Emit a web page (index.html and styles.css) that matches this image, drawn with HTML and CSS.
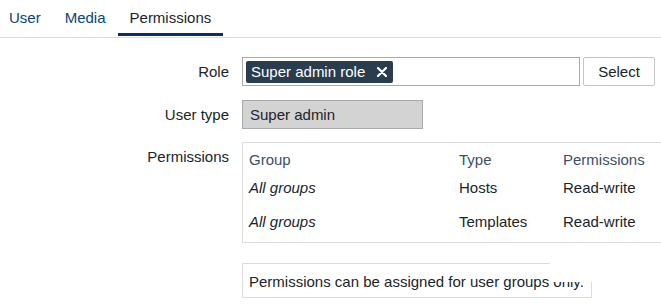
FILE: index.html
```html
<!DOCTYPE html>
<html lang="en">
<head>
  <meta charset="UTF-8" />
  <title>User - Permissions</title>
  <link rel="stylesheet" href="styles.css">
</head>
<body>
  <nav class="tabs">
    <a class="tab" href="#">User</a>
    <a class="tab" href="#">Media</a>
    <a class="tab tab-active" href="#">Permissions</a>
  </nav>

  <form class="form">
    <div class="row">
      <label class="label">Role</label>
      <div class="field field-role">
        <div class="multiselect">
          <span class="tag">Super admin role
            <svg class="tag-remove" width="10" height="10" viewBox="0 0 10 10"><path d="M1 1 L9 9 M9 1 L1 9" stroke="#fff" stroke-width="2.2" stroke-linecap="round"/></svg>
          </span>
        </div>
        <button type="button" class="btn-select">Select</button>
      </div>
    </div>

    <div class="row">
      <label class="label">User type</label>
      <div class="field">
        <div class="readonly">Super admin</div>
      </div>
    </div>

    <div class="row row-perms">
      <label class="label">Permissions</label>
      <div class="field">
        <div class="perm-box">
          <table class="perm-table">
            <thead>
              <tr><th class="col-group">Group</th><th class="col-type">Type</th><th>Permissions</th></tr>
            </thead>
            <tbody>
              <tr class="first"><td><i>All groups</i></td><td>Hosts</td><td>Read-write</td></tr>
              <tr class="second"><td><i>All groups</i></td><td>Templates</td><td>Read-write</td></tr>
            </tbody>
          </table>
        </div>
      </div>
    </div>

    <div class="row row-note">
      <span class="label"></span>
      <div class="field">
        <div class="note">Permissions can be assigned for user groups only.</div>
        <div class="note-cover"></div>
      </div>
    </div>
  </form>
</body>
</html>
```

FILE: styles.css
```css
body {
  font-family: "Liberation Sans", Arial, sans-serif;
  font-size: 15px;
  line-height: 17px;
  color: #1a252b;
  background-color: #fff;
  margin: 0;
  padding: 0;
  overflow: hidden;
}

.tabs {
  display: flex;
  margin-left: -3px;
  padding-bottom: 1px;
  border-bottom: 1px solid #dcdcdc;
}

.tab {
  padding: 9px 12px 7px;
  border-bottom: 3px solid transparent;
  color: #0a4479;
  text-decoration: none;
}

.tab-active {
  color: #1a252b;
  border-bottom-color: #0c2d68;
}

.form {
  margin-top: 19px;
}

.row {
  display: grid;
  grid-template-columns: 229px 1fr;
  column-gap: 13px;
  margin-bottom: 14px;
}

.row-perms {
  margin-top: -1px;
  margin-bottom: 20px;
}

.label {
  text-align: right;
  line-height: 29px;
  height: 29px;
}

.field {
  position: relative;
}

.field-role {
  display: flex;
  gap: 3px;
}

.multiselect {
  width: 338px;
  height: 29px;
  border: 1px solid #a8aaab;
  padding: 3px;
  box-sizing: border-box;
  display: flex;
  align-items: flex-start;
}

.tag {
  display: inline-flex;
  align-items: center;
  height: 22px;
  line-height: 22px;
  padding: 0 6px 0 5px;
  gap: 12px;
  background-color: #2a3d4e;
  color: #fff;
  border-radius: 2px;
}

.btn-select {
  width: 72px;
  height: 29px;
  border: 1px solid #c4c4c4;
  border-radius: 2px;
  background-color: #fff;
  font-family: inherit;
  font-size: 15px;
  color: #1a252b;
  padding: 0;
}

.readonly {
  width: 181px;
  height: 29px;
  box-sizing: border-box;
  border: 1px solid #a8aaab;
  background-color: #d3d3d3;
  padding-left: 7px;
  line-height: 27px;
}

.perm-box {
  width: 440px;
  border: 1px solid #dcdcdc;
}

.perm-table {
  border-collapse: collapse;
}

.perm-table th,
.perm-table td {
  text-align: left;
  padding: 0 7px 0 6px;
  font-weight: normal;
}

.perm-table th {
  color: #3a5167;
  padding-top: 8px;
  padding-bottom: 5px;
}

.perm-table .col-group {
  width: 197px;
}

.perm-table .col-type {
  width: 91px;
}

.perm-table .first td {
  padding-top: 6px;
  padding-bottom: 6px;
}

.perm-table .second td {
  padding-top: 11px;
  padding-bottom: 12px;
}

.note {
  width: 350px;
  height: 35px;
  box-sizing: border-box;
  border: 1px solid #dcdcdc;
  padding-left: 6px;
  line-height: 35px;
}

.note-cover {
  position: absolute;
  left: 308px;
  top: -4px;
  width: 50px;
  height: 23px;
  background-color: #fff;
}
```
